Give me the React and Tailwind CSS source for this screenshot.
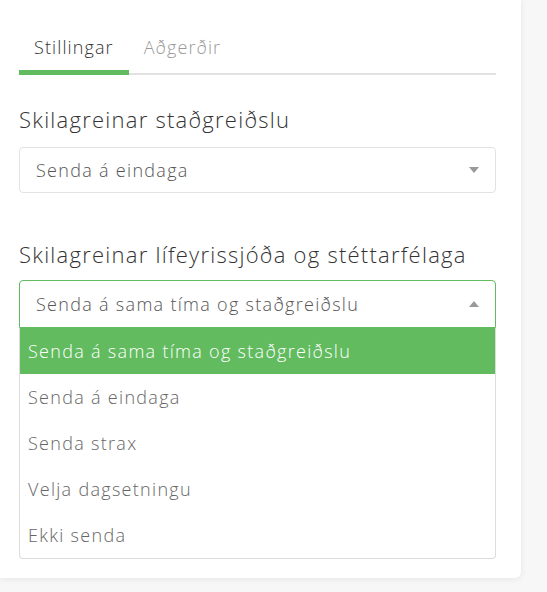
import React, { useState } from 'react';

const options = [
  'Senda á sama tíma og staðgreiðslu',
  'Senda á eindaga',
  'Senda strax',
  'Velja dagsetningu',
  'Ekki senda',
];

const Caret = ({ up }) => (
  <svg width="10" height="6" viewBox="0 0 10 6" className="shrink-0">
    {up ? <path d="M0 6 L5 0 L10 6 Z" fill="#999" /> : <path d="M0 0 L5 6 L10 0 Z" fill="#999" />}
  </svg>
);

const App = () => {
  const [tab, setTab] = useState(0);
  const [selected, setSelected] = useState(0);

  return (
    <div className="min-h-[592px] bg-[#f7f7f7]" style={{ fontFamily: '"Open Sans", sans-serif' }}>
      <div className="w-[521px] bg-white rounded-br-md shadow-[0_1px_6px_rgba(0,0,0,0.08)] px-[19px] pt-[27px] pb-[19px] font-light">
        {/* Tabs */}
        <div className="flex w-[477px] border-b-2 border-[#e2e2e2]">
          {['Stillingar', 'Aðgerðir'].map((label, i) => (
            <button
              key={label}
              onClick={() => setTab(i)}
              className={`px-[15px] pt-[9px] pb-[12px] text-[18px] leading-[22px] tracking-[1.1px] -mb-[2px] border-b-[5px] ${
                tab === i ? 'border-[#62bb5f] text-[#333]' : 'border-transparent text-[#999]'
              }`}
            >
              {label}
            </button>
          ))}
        </div>

        <h3 className="mt-[30px] text-[22px] leading-[28px] tracking-[1.25px] text-[#333]">Skilagreinar staðgreiðslu</h3>
        <div className="mt-[14px] w-[477px] h-[46px] flex items-center justify-between px-[16px] border border-[#e3e3e3] rounded text-[18px] tracking-[1.3px] text-[#555]">
          <span>Senda á eindaga</span>
          <Caret />
        </div>

        <h3 className="mt-[47px] text-[22px] leading-[28px] tracking-[1.25px] text-[#333]">Skilagreinar lífeyrissjóða og stéttarfélaga</h3>
        <div className="mt-[12px] w-[477px]">
          <div className="h-[48px] flex items-center justify-between px-[16px] border border-[#62bb5f] rounded-t text-[18px] tracking-[1.3px] text-[#555]">
            <span>{options[selected]}</span>
            <Caret up />
          </div>
          <ul className="border border-t-0 border-[#dcdcdc] rounded-b">
            {options.map((opt, i) => (
              <li
                key={opt}
                onClick={() => setSelected(i)}
                className={`h-[46px] flex items-center px-[8px] text-[18px] tracking-[1.3px] ${
                  i === selected ? 'bg-[#62bb5f] text-white' : 'text-[#666]'
                }`}
              >
                {opt}
              </li>
            ))}
          </ul>
        </div>
      </div>
    </div>
  );
};

export default App;
